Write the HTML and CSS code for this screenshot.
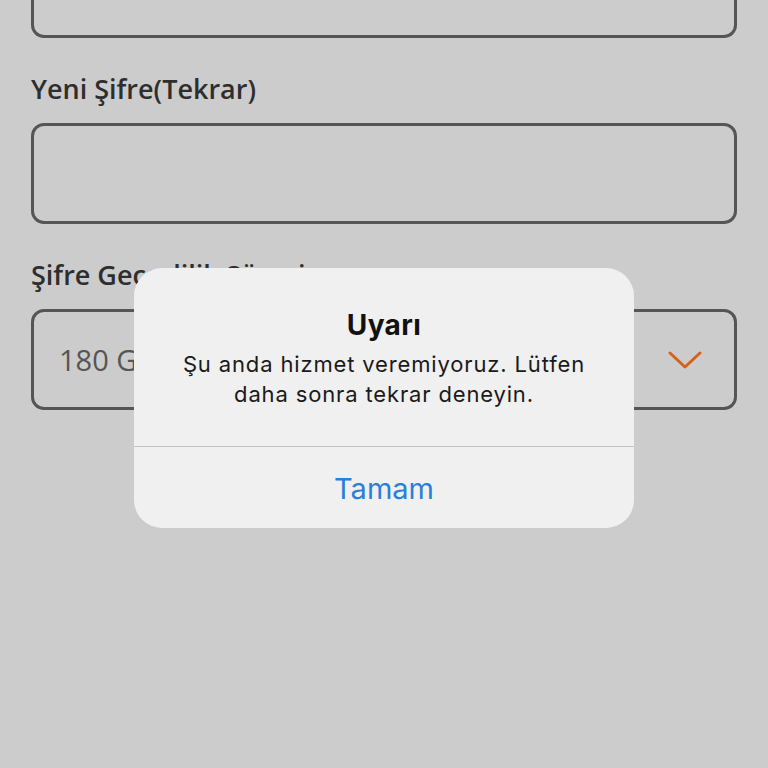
FILE: index.html
```html
<!DOCTYPE html>
<html lang="tr">
<head>
<meta charset="utf-8">
<link rel="stylesheet" href="styles.css">
</head>
<body>
<div class="form">
  <div class="field first"></div>
  <div class="label">Yeni Şifre(Tekrar)</div>
  <div class="field"></div>
  <div class="label">Şifre Geçerlilik Süresi</div>
  <div class="field select">
    <span class="value">180 Gün</span>
    <svg class="chevron" width="34" height="20" viewBox="0 0 34 20"><path d="M2 3 L17 17 L32 3" fill="none" stroke="#d4621c" stroke-width="3" stroke-linecap="round" stroke-linejoin="round"/></svg>
  </div>
</div>
<div class="alert">
  <div class="alert-body">
    <div class="alert-title">Uyarı</div>
    <div class="alert-msg">Şu anda hizmet veremiyoruz. Lütfen<br>daha sonra tekrar deneyin.</div>
  </div>
  <div class="alert-btn">Tamam</div>
</div>
</body>
</html>
```
FILE: styles.css
```css
html, body {
  margin: 0;
  padding: 0;
  background: #cccccc;
  width: 768px;
  height: 768px;
  overflow: hidden;
}
body {
  position: relative;
  font-family: "Open Sans", "Noto Sans", sans-serif;
}
.form {
  padding: 0 31px;
}
.field {
  box-sizing: border-box;
  height: 101px;
  border: 3px solid #555555;
  border-radius: 13px;
}
.field.first {
  margin-top: -63px;
}
.label {
  margin-top: 34px;
  margin-bottom: 17px;
  height: 34px;
  line-height: 34px;
  font-size: 27px;
  font-weight: 600;
  color: #2e2e2e;
}
.select {
  display: flex;
  align-items: center;
  justify-content: space-between;
  padding: 0 32px 0 25px;
}
.value {
  font-size: 29px;
  color: #555555;
}
.chevron {
  display: block;
}
.alert {
  position: absolute;
  left: 134px;
  top: 268px;
  width: 500px;
  height: 260px;
  border-radius: 28px;
  background: #f0f0f0;
  display: flex;
  flex-direction: column;
  font-family: Inter, "Noto Sans", sans-serif;
  text-align: center;
  overflow: hidden;
}
.alert-body {
  height: 179px;
  box-sizing: border-box;
  padding-top: 40px;
  border-bottom: 1px solid #c4c4c4;
}
.alert-title {
  font-size: 28px;
  font-weight: 700;
  line-height: 34px;
  letter-spacing: 0.4px;
  color: #111111;
}
.alert-msg {
  margin-top: 7px;
  font-size: 22px;
  line-height: 30px;
  letter-spacing: 0.85px;
  color: #1a1a1a;
}
.alert-btn {
  flex: 1;
  display: flex;
  align-items: center;
  justify-content: center;
  padding-top: 2px;
  font-size: 29px;
  color: #2a7fd8;
}
```
